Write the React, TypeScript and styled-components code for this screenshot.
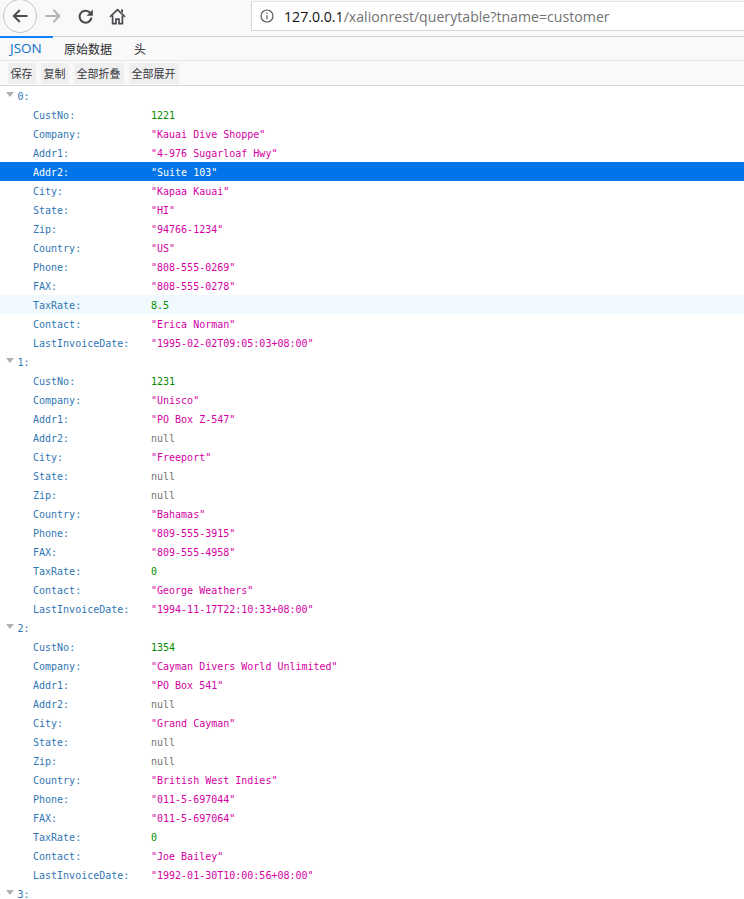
import React from 'react';
import styled, { createGlobalStyle } from 'styled-components';

const GlobalStyle = createGlobalStyle`
  html, body {
    margin: 0;
    padding: 0;
    background: #fff;
    overflow: hidden;
  }
`;

const Page = styled.div`
  width: 744px;
  height: 899px;
  overflow: hidden;
  font-family: "Noto Sans CJK SC", "Liberation Sans", sans-serif;
`;

const Toolbar = styled.div`
  height: 37px;
  box-sizing: border-box;
  background: #f9f9fa;
  border-bottom: 1px solid #cfcfd1;
  display: flex;
  align-items: flex-start;
`;

const NavGroup = styled.div`
  display: flex;
  align-items: center;
  width: 250px;
  height: 32px;
  padding-left: 3px;
  box-sizing: border-box;
`;

const BackCircle = styled.div`
  width: 34px;
  height: 34px;
  flex: none;
  box-sizing: border-box;
  border-radius: 50%;
  border: 1px solid #c4c4c6;
  background: #fafafa;
  display: flex;
  align-items: center;
  justify-content: center;
`;

const NavIcon = styled.div`
  width: 32px;
  flex: none;
  display: flex;
  align-items: center;
  justify-content: center;
`;

const UrlBar = styled.div`
  flex: 1;
  height: 30px;
  box-sizing: border-box;
  margin-top: 1px;
  margin-left: 1px;
  background: #fff;
  border: 1px solid #d6d6d8;
  border-right: none;
  border-top-color: #e4e4e6;
  display: flex;
  align-items: center;
  padding-left: 8px;
  font-family: "Open Sans", "Liberation Sans", sans-serif;
  font-size: 14.15px;
  color: #737373;
`;

const Host = styled.span`
  color: #111;
`;

const InfoIcon = styled.svg`
  margin-right: 10px;
  flex: none;
`;

const TabBar = styled.div`
  height: 24px;
  box-sizing: border-box;
  background: #f9f9fa;
  border-bottom: 1px solid #e6e6e8;
  display: flex;
  font-size: 12px;
`;

const Tab = styled.div<{ $active?: boolean }>`
  width: ${({ $active }) => ($active ? '53px' : 'auto')};
  padding: 0 ${({ $active }) => ($active ? '0' : '11px')};
  box-sizing: border-box;
  padding-left: ${({ $active }) => ($active ? '10px' : '11px')};
  line-height: 23px;
  font-size: ${({ $active }) => ($active ? '13.5px' : '12px')};
  color: ${({ $active }) => ($active ? '#0a6fc9' : '#2a2a2e')};
  position: relative;
  font-family: ${({ $active }) => ($active ? '"Open Sans", sans-serif' : 'inherit')};

  &::before {
    content: '';
    display: ${({ $active }) => ($active ? 'block' : 'none')};
    position: absolute;
    top: -1px;
    left: 0;
    right: 0;
    height: 2px;
    background: #0a84ff;
  }
`;

const ActionBar = styled.div`
  height: 25px;
  box-sizing: border-box;
  background: #f9f9fa;
  border-bottom: 1px solid #d8d8da;
  display: flex;
  align-items: center;
  padding-left: 7.5px;
  gap: 5px;
`;

const ActionButton = styled.div`
  height: 21px;
  padding: 0 3px;
  background: #efeff0;
  color: #38383d;
  font-size: 11px;
  line-height: 21px;
`;

const Tree = styled.div`
  font-family: "DejaVu Sans Mono", "Liberation Mono", monospace;
  font-size: 10px;
`;

const Row = styled.div<{ $state?: 'selected' | 'hover' }>`
  height: 19px;
  line-height: 21px;
  display: flex;
  white-space: pre;
  background: ${({ $state }) =>
    $state === 'selected' ? '#0074e8' : $state === 'hover' ? '#f0f9fe' : 'transparent'};
`;

const Twisty = styled.span`
  width: 0;
  height: 0;
  margin: 6px 3.5px 0 6px;
  border-left: 4px solid transparent;
  border-right: 4px solid transparent;
  border-top: 5px solid #b1b1b3;
`;

const IndexLabel = styled.span`
  color: #2f76b5;
`;

const Key = styled.span<{ $selected?: boolean }>`
  width: 118px;
  margin-left: 33px;
  color: ${({ $selected }) => ($selected ? '#fff' : '#2f76b5')};
`;

const Value = styled.span<{ $kind: string; $selected?: boolean }>`
  color: ${({ $kind, $selected }) => {
    if ($selected) return '#fff';
    if ($kind === 'number') return '#058b00';
    if ($kind === 'null') return '#737373';
    return '#d400a3';
  }};
`;

const customers: Array<Array<[string, string | number | null]>> = [
  [
    ['CustNo', 1221],
    ['Company', 'Kauai Dive Shoppe'],
    ['Addr1', '4-976 Sugarloaf Hwy'],
    ['Addr2', 'Suite 103'],
    ['City', 'Kapaa Kauai'],
    ['State', 'HI'],
    ['Zip', '94766-1234'],
    ['Country', 'US'],
    ['Phone', '808-555-0269'],
    ['FAX', '808-555-0278'],
    ['TaxRate', 8.5],
    ['Contact', 'Erica Norman'],
    ['LastInvoiceDate', '1995-02-02T09:05:03+08:00'],
  ],
  [
    ['CustNo', 1231],
    ['Company', 'Unisco'],
    ['Addr1', 'PO Box Z-547'],
    ['Addr2', null],
    ['City', 'Freeport'],
    ['State', null],
    ['Zip', null],
    ['Country', 'Bahamas'],
    ['Phone', '809-555-3915'],
    ['FAX', '809-555-4958'],
    ['TaxRate', 0],
    ['Contact', 'George Weathers'],
    ['LastInvoiceDate', '1994-11-17T22:10:33+08:00'],
  ],
  [
    ['CustNo', 1354],
    ['Company', 'Cayman Divers World Unlimited'],
    ['Addr1', 'PO Box 541'],
    ['Addr2', null],
    ['City', 'Grand Cayman'],
    ['State', null],
    ['Zip', null],
    ['Country', 'British West Indies'],
    ['Phone', '011-5-697044'],
    ['FAX', '011-5-697064'],
    ['TaxRate', 0],
    ['Contact', 'Joe Bailey'],
    ['LastInvoiceDate', '1992-01-30T10:00:56+08:00'],
  ],
];

function kindOf(value: string | number | null) {
  if (value === null) return 'null';
  return typeof value;
}

function showValue(value: string | number | null) {
  if (value === null) return 'null';
  return typeof value === 'string' ? `"${value}"` : String(value);
}

export default function App() {
  return (
    <Page>
      <GlobalStyle />
      <Toolbar>
        <NavGroup>
          <BackCircle>
            <svg width="18" height="18" viewBox="0 0 18 18" fill="none" stroke="#4a4a4f" strokeWidth="1.9">
              <path d="M16.5 9H3M8.8 3L2.8 9l6 6" />
            </svg>
          </BackCircle>
          <NavIcon>
            <svg width="18" height="18" viewBox="0 0 18 18" fill="none" stroke="#b4b4b6" strokeWidth="1.9">
              <path d="M1.5 9h14M9.5 3l6 6-6 6" />
            </svg>
          </NavIcon>
          <NavIcon>
            <svg width="17" height="17" viewBox="0 0 17 17" fill="none" stroke="#4a4a4f" strokeWidth="2">
              <path d="M14.5 9.5A6 6 0 1 1 12.6 4.2L14.5 6.2" />
              <path d="M15.8 1.5v6.2H9.6" fill="#4a4a4f" stroke="none" />
            </svg>
          </NavIcon>
          <NavIcon>
            <svg width="17" height="17" viewBox="0 0 17 17" fill="none" stroke="#4a4a4f" strokeWidth="1.7">
              <path d="M1 8.8L8.5 1.6 16 8.8" />
              <path d="M3.6 7.5v8.2h3.4v-4.6h3v4.6h3.4V7.5" />
              <path d="M12 1.5h2v3.5l-2-1.8z" fill="#4a4a4f" stroke="none" />
            </svg>
          </NavIcon>
        </NavGroup>
        <UrlBar>
          <InfoIcon width="14" height="14" viewBox="0 0 14 14" fill="none" stroke="#5a5a5f" strokeWidth="1.2">
            <circle cx="7" cy="7" r="6" />
            <path d="M7 6.2v4M7 3.6v1.4" />
          </InfoIcon>
          <Host>127.0.0.1</Host>/xalionrest/querytable?tname=customer
        </UrlBar>
      </Toolbar>
      <TabBar>
        <Tab $active>JSON</Tab>
        <Tab>原始数据</Tab>
        <Tab>头</Tab>
      </TabBar>
      <ActionBar>
        <ActionButton>保存</ActionButton>
        <ActionButton>复制</ActionButton>
        <ActionButton>全部折叠</ActionButton>
        <ActionButton>全部展开</ActionButton>
      </ActionBar>
      <Tree>
        {customers.map((customer, index) => (
          <React.Fragment key={index}>
            <Row>
              <Twisty />
              <IndexLabel>{index}:</IndexLabel>
            </Row>
            {customer.map(([key, value]) => {
              const selected = index === 0 && key === 'Addr2';
              const hover = index === 0 && key === 'TaxRate';
              return (
                <Row key={key} $state={selected ? 'selected' : hover ? 'hover' : undefined}>
                  <Key $selected={selected}>{key}:</Key>
                  <Value $kind={kindOf(value)} $selected={selected}>
                    {showValue(value)}
                  </Value>
                </Row>
              );
            })}
          </React.Fragment>
        ))}
        <Row>
          <Twisty />
          <IndexLabel>3:</IndexLabel>
        </Row>
      </Tree>
    </Page>
  );
}
